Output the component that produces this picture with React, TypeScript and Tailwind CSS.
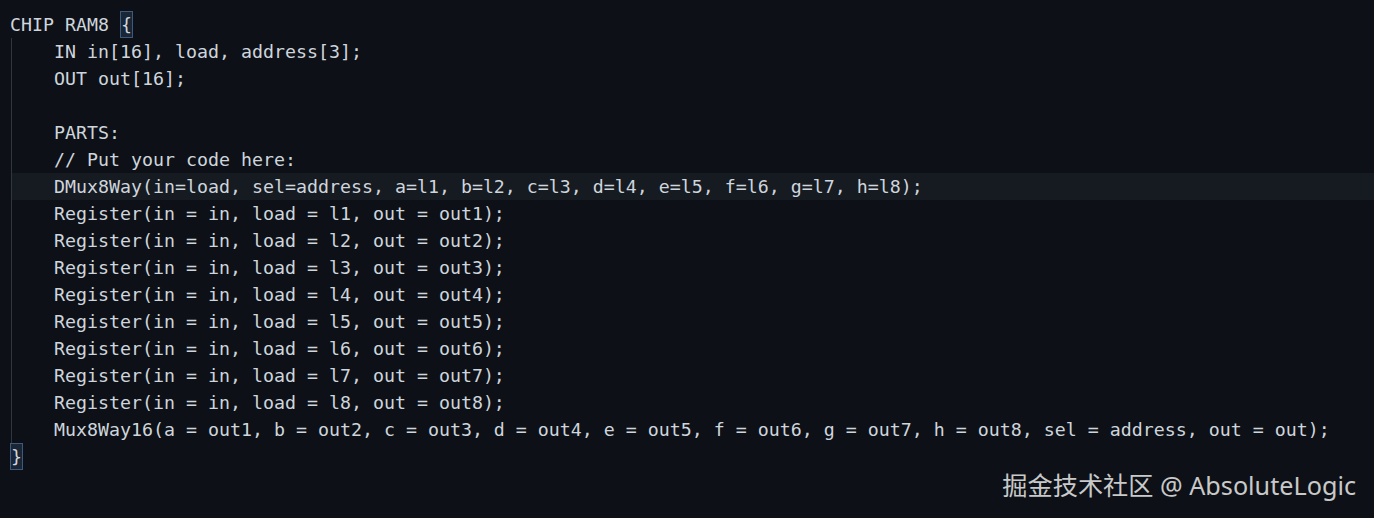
import React from "react";

const lines: { text: string; indent?: boolean; active?: boolean }[] = [
  { text: "CHIP RAM8 {" },
  { text: "IN in[16], load, address[3];", indent: true },
  { text: "OUT out[16];", indent: true },
  { text: "", indent: true },
  { text: "PARTS:", indent: true },
  { text: "// Put your code here:", indent: true },
  { text: "DMux8Way(in=load, sel=address, a=l1, b=l2, c=l3, d=l4, e=l5, f=l6, g=l7, h=l8);", indent: true, active: true },
  { text: "Register(in = in, load = l1, out = out1);", indent: true },
  { text: "Register(in = in, load = l2, out = out2);", indent: true },
  { text: "Register(in = in, load = l3, out = out3);", indent: true },
  { text: "Register(in = in, load = l4, out = out4);", indent: true },
  { text: "Register(in = in, load = l5, out = out5);", indent: true },
  { text: "Register(in = in, load = l6, out = out6);", indent: true },
  { text: "Register(in = in, load = l7, out = out7);", indent: true },
  { text: "Register(in = in, load = l8, out = out8);", indent: true },
  {
    text: "Mux8Way16(a = out1, b = out2, c = out3, d = out4, e = out5, f = out6, g = out7, h = out8, sel = address, out = out);",
    indent: true,
  },
  { text: "}" },
];

const Brace = ({ ch }: { ch: string }) => (
  <span className="inline-block h-[27px] border border-[#3b5a7c] bg-[#1a2535] leading-[25px]">{ch}</span>
);

const App = () => {
  return (
    <div className="relative h-[518px] w-full overflow-hidden bg-[#0d1117] pt-[11px] font-['DejaVu_Sans_Mono',monospace] text-[18.27px] text-[#cfd5dc]">
      {lines.map((l, i) => (
        <div key={i} className={`flex h-[27px] leading-[27px] ${l.active ? "bg-[#161b22]" : ""}`}>
          <div className="w-[11px] shrink-0 bg-[#0d1117]" />
          {l.indent ? (
            <>
              <div className="w-[1px] shrink-0 bg-[#30363d]" />
              <div className="w-[42px] shrink-0" />
            </>
          ) : null}
          <div className={`whitespace-pre ${l.indent ? "" : "-ml-[1px]"}`}>
            {l.text === "CHIP RAM8 {" ? (
              <>
                CHIP RAM8 <Brace ch="{" />
              </>
            ) : l.text === "}" ? (
              <Brace ch="}" />
            ) : (
              l.text
            )}
          </div>
        </div>
      ))}
      <div className="absolute right-[18px] top-[467px] font-['Noto_Sans','Noto_Sans_CJK_SC',sans-serif] text-[25.2px] leading-[36px] text-[#c9c9c9]">
        掘金技术社区 @ AbsoluteLogic
      </div>
    </div>
  );
};

export default App;
